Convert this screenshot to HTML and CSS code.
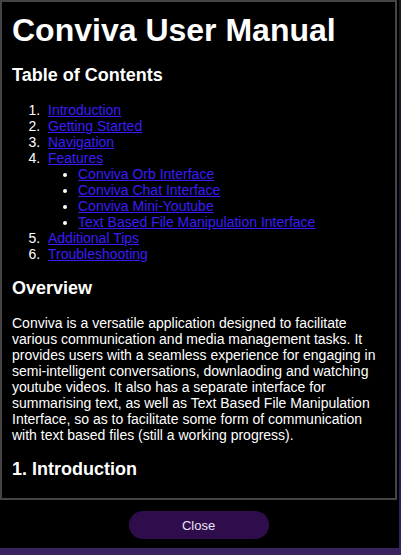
FILE: index.html
```html
<!DOCTYPE html>
<html lang="en">
<head>
<meta charset="utf-8">
<title>Conviva User Manual</title>
<link rel="stylesheet" href="styles.css">
</head>
<body>
<div class="backdrop">
  <div class="modal">
    <div class="manual">
      <h1 class="title">Conviva User Manual</h1>
      <h2 class="section">Table of Contents</h2>
      <ol class="toc">
        <li><a href="#introduction">Introduction</a></li>
        <li><a href="#getting-started">Getting Started</a></li>
        <li><a href="#navigation">Navigation</a></li>
        <li><a href="#features">Features</a>
          <ul class="subtoc">
            <li><a href="#orb">Conviva Orb Interface</a></li>
            <li><a href="#chat">Conviva Chat Interface</a></li>
            <li><a href="#youtube">Conviva Mini-Youtube</a></li>
            <li><a href="#files">Text Based File Manipulation Interface</a></li>
          </ul>
        </li>
        <li><a href="#tips">Additional Tips</a></li>
        <li><a href="#troubleshooting">Troubleshooting</a></li>
      </ol>
      <h2 class="section">Overview</h2>
      <p class="text">Conviva is a versatile application designed to facilitate various communication and media management tasks. It provides users with a seamless experience for engaging in semi-intelligent conversations, downlaoding and watching youtube videos. It also has a separate interface for summarising text, as well as Text Based File Manipulation Interface, so as to facilitate some form of communication with text based files (still a working progress).</p>
      <h2 class="section" id="introduction">1. Introduction</h2>
    </div>
    <div class="footer">
      <button class="close-btn" type="button">Close</button>
    </div>
  </div>
</div>
</body>
</html>
```

FILE: styles.css
```css
html, body {
  margin: 0;
  padding: 0;
}

body {
  width: 401px;
  height: 555px;
  overflow: hidden;
  background: linear-gradient(180deg, #1b1a22 0%, #1e1530 40%, #2a1850 80%, #3a2460 100%);
  font-family: "Liberation Sans", Arial, Helvetica, sans-serif;
}

.backdrop {
  height: 555px;
  display: flex;
  flex-direction: column;
}

.modal {
  width: 397px;
  height: 548px;
  padding-right: 2px;
  background: #000;
  display: flex;
  flex-direction: column;
}

.manual {
  box-sizing: border-box;
  width: 397px;
  height: 500px;
  border: 2px solid #444;
  padding: 10px 10px 0 10px;
  color: #fff;
  overflow-y: auto;
  scrollbar-width: none;
}

.manual::-webkit-scrollbar {
  display: none;
}

.title {
  margin: 0;
  font-size: 32px;
  line-height: 37px;
  font-weight: bold;
}

.section {
  margin: 16px 0;
  font-size: 18px;
  line-height: 21px;
  font-weight: bold;
}

.toc {
  margin: 16px 0;
  padding-left: 36px;
  font-size: 14px;
  line-height: 16px;
  color: #fff;
}

.toc > li::marker {
  content: counter(list-item) ".\00a0\00a0";
  color: #fff;
}

.subtoc {
  margin: 0;
  padding-left: 30px;
  list-style: disc;
}

.subtoc > li::marker {
  color: #fff;
}

.toc a {
  color: #3b1cf8;
  text-decoration: underline;
}

.text {
  margin: 16px 0;
  font-size: 14px;
  line-height: 16px;
}

.footer {
  flex: 1;
  display: flex;
  justify-content: center;
  align-items: flex-start;
  padding-top: 11px;
}

.close-btn {
  width: 140px;
  height: 28px;
  border: none;
  border-radius: 14px;
  background: #2f0d4d;
  color: #ece4f4;
  font-family: "Liberation Sans", Arial, Helvetica, sans-serif;
  font-size: 13px;
  padding: 0;
  cursor: pointer;
}
```
